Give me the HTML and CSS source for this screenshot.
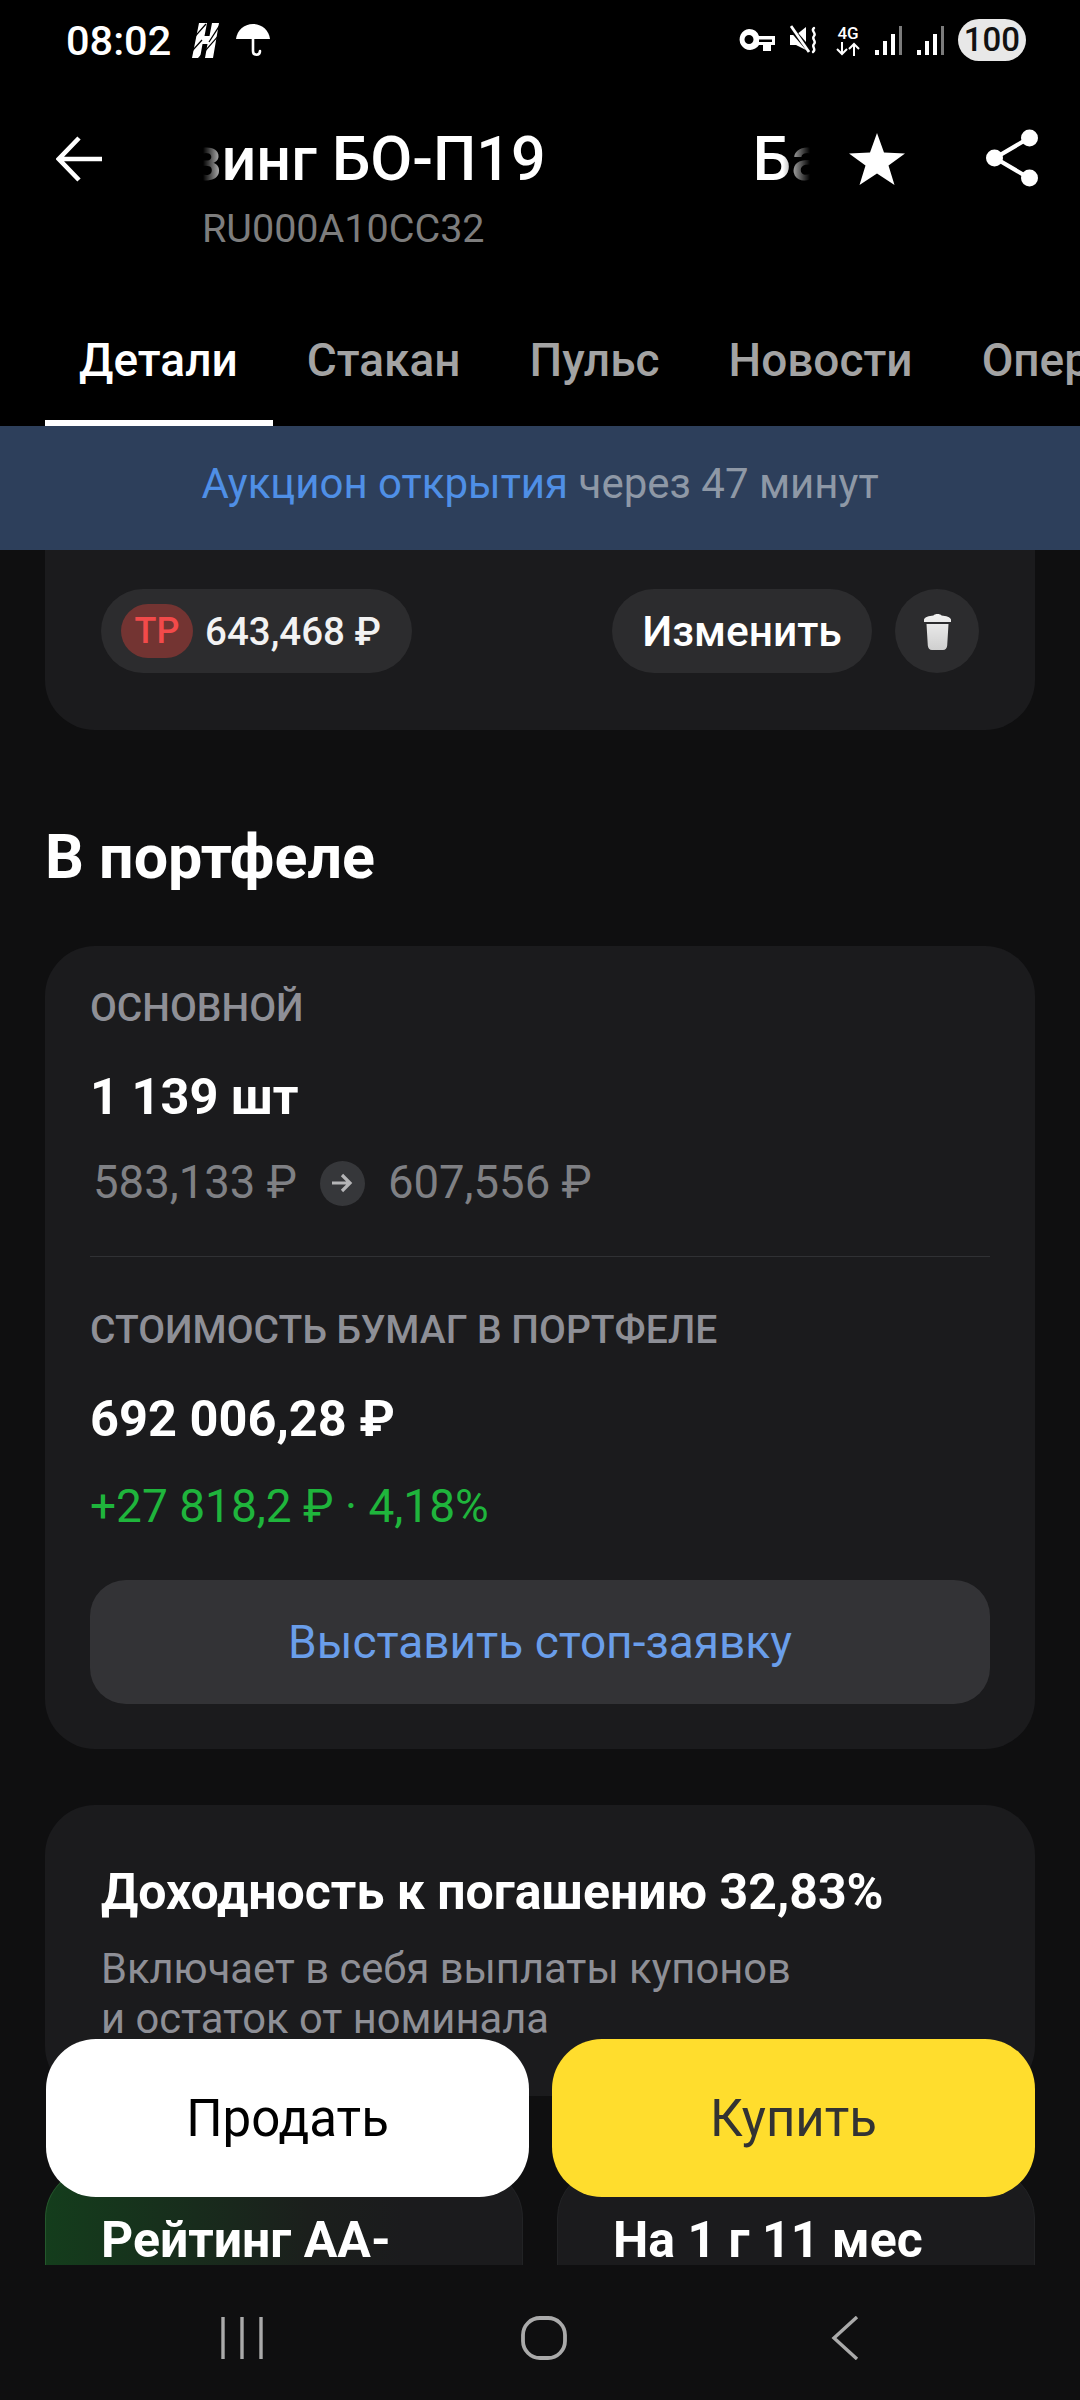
FILE: index.html
```html
<!DOCTYPE html>
<html lang="ru">
<head>
<meta charset="utf-8">
<title>Лизинг БО-П19</title>
<link rel="stylesheet" href="styles.css">
</head>
<body>
<div class="screen">
  <header class="top">
    <div class="status">
      <div class="status-left">
        <span class="time">08:02</span>
        <svg class="st-h" viewBox="0 0 27 35"><path fill="#fff" d="M7 0h8l-2.500 13h5L20 0h7l-6 35h-8l2.500-14h-5L8 35H0z"/><path stroke="#000" stroke-width="1.300" d="M-1 18 14 1M6 36 28 11M0 28 10 17M17 19 28 2"/></svg>
        <svg class="st-u" viewBox="0 0 34 34"><path fill="#fff" d="M17 1C8 1 1 7.500 0 16h34C33 7.500 26 1 17 1z"/><path fill="none" stroke="#fff" stroke-width="2.600" stroke-linecap="round" d="M17 15v13c0 5 7 5 7 0"/></svg>
      </div>
      <div class="status-right">
        <svg class="st-key" viewBox="0 0 37 24"><path fill="#fff" fill-rule="evenodd" d="M11 1a10.500 10.500 0 0 1 10 7h16v9h-4v6h-8v-6h-4a10.500 10.500 0 1 1-10-16zm0 6a4.500 4.500 0 1 0 0 9 4.500 4.500 0 0 0 0-9zm10 4.500a10 10 0 0 1 0 2.500h13v-2.500z"/></svg>
        <svg class="st-mute" viewBox="0 0 30 30"><path fill="#fff" d="M0 10h6l10-8v23L6 20H0z"/><path stroke="#000" stroke-width="5" d="M-2 0 22 28"/><path stroke="#fff" stroke-width="2.800" d="M1 1 19 27"/><path fill="none" stroke="#fff" stroke-width="2.400" stroke-linecap="round" d="M24 3c-4 3 3 5 0 8s3 5 0 8 3 5-1 8"/></svg>
        <div class="st-net">
          <span class="st-4g">4G</span>
          <svg class="st-arrows" viewBox="0 0 26 14"><path fill="none" stroke="#fff" stroke-width="2" d="M7 0v12M2 7l5 5 5-5M19 14V2M14 7l5-5 5 5"/></svg>
        </div>
        <svg class="st-sig" viewBox="0 0 28 29"><path fill="#fff" d="M0 24h4v5H0zM8 15h4v14H8zM16 8h4v21h-4z"/><path fill="#7b7b7b" d="M24 0h3v29h-3z"/></svg>
        <svg class="st-sig" viewBox="0 0 28 29"><path fill="#fff" d="M0 24h4v5H0zM8 15h4v14H8zM16 8h4v21h-4z"/><path fill="#7b7b7b" d="M24 0h3v29h-3z"/></svg>
        <span class="batt">100</span>
      </div>
    </div>
    <div class="title-row">
      <svg class="ic-back" viewBox="0 0 46 46"><path fill="none" stroke="#fff" stroke-width="4.600" d="M46 23H3M23 2 2.800 23 23 44"/></svg>
      <div class="title-col">
        <div class="marquee"><div class="marquee-track"><span class="title-part">Балтийский лизинг БО-П19</span><span class="title-part">Балтийский лизинг БО-П19</span></div></div>
        <div class="isin">RU000A10CC32</div>
      </div>
      <svg class="ic-star" viewBox="0 0 56 52"><path fill="#fff" d="M28 0l7 19.500 21 1-16.500 12 6 19.500L28 40.500 10.500 52l6-19.500L0 20.500l21-1z"/></svg>
      <svg class="ic-share" viewBox="0 0 52 58"><path fill="none" stroke="#fff" stroke-width="4.200" d="M43 9 9 29l34 20"/><circle fill="#fff" cx="43.500" cy="9" r="8.500"/><circle fill="#fff" cx="8.500" cy="29" r="8.500"/><circle fill="#fff" cx="43.500" cy="49" r="8.500"/></svg>
    </div>
    <nav class="tabs">
      <a class="tab tab-active">Детали</a>
      <a class="tab">Стакан</a>
      <a class="tab">Пульс</a>
      <a class="tab">Новости</a>
      <a class="tab">Операции</a>
    </nav>
  </header>
  <div class="banner"><span class="banner-link">Аукцион открытия</span> через 47 минут</div>
  <main class="content">
    <section class="card card-order">
      <div class="order-row">
        <div class="pill pill-tp"><span class="tp-badge">ТР</span><span class="tp-price">643,468 ₽</span></div>
        <div class="order-actions">
          <button class="pill pill-btn">Изменить</button>
          <button class="pill pill-trash" aria-label="Удалить">
            <svg class="ic-trash" viewBox="0 0 27 37"><defs><linearGradient id="trash-fill" x1="0" y1="0" x2="0" y2="1"><stop offset="0" stop-color="#f2f2f2"/><stop offset="1" stop-color="#cfcfcf"/></linearGradient></defs><path fill="url(#trash-fill)" d="M9.500 2.500C10.500.5 16.500.5 17.500 2.500 22 3 26.500 4 27 6.500V9H0V6.500C.5 4 5 3 9.500 2.500zM2.500 11h22l-1.300 21.500c-.2 2.500-1.700 4.500-4.200 4.500H8c-2.500 0-4-2-4.200-4.500z"/></svg>
          </button>
        </div>
      </div>
    </section>
    <h2 class="section-title">В портфеле</h2>
    <section class="card card-portfolio">
      <div class="label">ОСНОВНОЙ</div>
      <div class="big">1 139 шт</div>
      <div class="prices">
        <span>583,133 ₽</span>
        <span class="price-arrow"><svg viewBox="0 0 22 22"><path fill="none" stroke="#b5b5b7" stroke-width="3.200" d="M1 11h18M11 3l8 8-8 8"/></svg></span>
        <span>607,556 ₽</span>
      </div>
      <div class="divider"></div>
      <div class="label">СТОИМОСТЬ БУМАГ В ПОРТФЕЛЕ</div>
      <div class="big">692 006,28 ₽</div>
      <div class="gain">+27 818,2 ₽ · 4,18%</div>
      <button class="stop-btn">Выставить стоп-заявку</button>
    </section>
    <section class="card card-yield">
      <h3 class="yield-title">Доходность к погашению 32,83%</h3>
      <p class="yield-text">Включает в себя выплаты купонов<br>и остаток от номинала</p>
    </section>
    <div class="mini-row">
      <div class="mini mini-green">Рейтинг АА-</div>
      <div class="mini">На 1 г 11 мес</div>
    </div>
    <div class="actions">
      <button class="act act-sell">Продать</button>
      <button class="act act-buy">Купить</button>
    </div>
  </main>
  <footer class="navbar">
    <svg class="nav-ic" viewBox="0 0 44 44"><path fill="none" stroke="#aaa" stroke-width="3.400" d="M3 1v42M22 1v42M41 1v42"/></svg>
    <svg class="nav-ic" viewBox="0 0 46 44"><rect fill="none" stroke="#aaa" stroke-width="3.800" x="2" y="2" width="42" height="40" rx="17"/></svg>
    <svg class="nav-ic" viewBox="0 0 30 44"><path fill="none" stroke="#aaa" stroke-width="3.400" d="M27 1 4 22l23 21"/></svg>
  </footer>
</div>
</body>
</html>
```
FILE: styles.css
```css
* { box-sizing: border-box; }
html, body { margin: 0; padding: 0; background: #0f0f10; }
body { font-family: Roboto, "Noto Sans", sans-serif; color: #fff; }
button { font-family: inherit; border: 0; margin: 0; }
.screen { width: 1080px; height: 2400px; overflow: hidden; display: flex; flex-direction: column; background: #0f0f10; }

.top { background: #000; height: 426px; flex: none; display: flex; flex-direction: column; }
.status { height: 70px; padding: 10px 40px 0 66px; display: flex; justify-content: space-between; align-items: center; flex: none; }
.status-left, .status-right { display: flex; align-items: center; }
.time { font-size: 41.500px; font-weight: 500; }
.st-h { width: 27px; height: 35px; margin-left: 21px; }
.st-u { width: 34px; height: 34px; margin-left: 17px; }
.status-right { padding-right: 14px; }
.st-key { width: 37px; height: 24px; }
.st-mute { width: 30px; height: 30px; margin-left: 15px; }
.st-net { width: 26px; margin-left: 15px; display: flex; flex-direction: column; align-items: center; }
.st-4g { font-size: 17px; line-height: 16px; font-weight: 500; }
.st-arrows { width: 26px; height: 14px; margin-top: 1px; }
.st-sig { width: 28px; height: 29px; margin-left: 14px; }
.st-sig + .batt { margin-left: 13px; }
.batt { width: 68px; height: 42px; border-radius: 21px; background: #e8e8e8; color: #111; font-size: 33px; font-weight: 500; line-height: 42px; text-align: center; }

.title-row { display: flex; align-items: flex-start; padding: 54px 0 0 56px; height: 202px; flex: none; }
.ic-back { width: 46px; height: 46px; margin-top: 12px; flex: none; }
.title-col { width: 607px; margin-left: 101px; flex: none; }
.marquee { height: 70px; overflow: hidden; -webkit-mask-image: linear-gradient(90deg, transparent 0, #000 24px, #000 580px, transparent 607px); mask-image: linear-gradient(90deg, transparent 0, #000 24px, #000 580px, transparent 607px); }
.marquee-track { display: flex; white-space: nowrap; margin-left: -439px; font-size: 61px; line-height: 70px; font-weight: 500; }
.title-part { padding-right: 207px; flex: none; }
.isin { font-size: 39.500px; line-height: 46px; font-weight: 400; color: #7d7d7d; margin: 12px 0 0 -1px; }
.ic-star { width: 56px; height: 52px; margin-left: 39px; margin-top: 9px; flex: none; }
.ic-share { width: 52px; height: 58px; margin-left: 81px; margin-top: 5px; flex: none; }

.tabs { display: flex; flex: 1; padding-left: 45px; align-items: stretch; overflow: hidden; white-space: nowrap; }
.tab { font-size: 46px; font-weight: 500; color: #a3a3a3; padding: 62px 35px 0 34px; display: flex; align-items: flex-start; line-height: 52px; flex: none; }
.tab-active { color: #fff; border-bottom: 6px solid #fff; }

.banner { height: 124px; background: #2d3f5b; flex: none; display: flex; align-items: center; justify-content: center; padding-bottom: 10px; font-size: 42px; color: #8e98a6; white-space: pre; }
.banner-link { color: #4f8fe6; }

.content { flex: 1; position: relative; overflow: hidden; padding: 0 45px; min-height: 0; }
.card { background: #1b1b1d; border-radius: 50px; }
.card-order { margin-top: -60px; height: 240px; padding: 99px 56px 0; }
.order-row { display: flex; justify-content: space-between; }
.order-actions { display: flex; gap: 23px; }
.pill { height: 84px; border-radius: 42px; background: #2c2c2e; display: flex; align-items: center; color: #fff; }
.pill-tp { width: 311px; padding-left: 20px; }
.tp-badge { width: 72px; height: 54px; border-radius: 27px; background: #733432; color: #f24a4a; font-size: 36px; font-weight: 500; display: flex; align-items: center; justify-content: center; flex: none; }
.tp-price { font-size: 38.500px; font-weight: 500; margin-left: 12px; color: #f2f2f2; }
.pill-btn { width: 260px; justify-content: center; font-size: 42.500px; font-weight: 500; }
.pill-trash { width: 84px; justify-content: center; padding: 0; }
.ic-trash { width: 27px; height: 37px; }

.section-title { margin: 94px 0 0 0; font-size: 61px; line-height: 66px; font-weight: 700; height: 66px; }

.card-portfolio { margin-top: 56px; height: 803px; padding: 40px 45px 0; display: flex; flex-direction: column; align-items: flex-start; }
.label { font-size: 39px; line-height: 44px; font-weight: 500; color: #8e8f96; }
.big { font-size: 50.500px; line-height: 58px; font-weight: 700; margin-top: 38px; }
.prices { display: flex; align-items: center; margin-top: 31px; font-size: 45.500px; line-height: 52px; color: #7f8084; padding-left: 3px; }
.price-arrow { width: 45px; height: 45px; border-radius: 50%; background: #36373a; margin: 0 23px 0 23px; display: flex; align-items: center; justify-content: center; }
.price-arrow svg { width: 22px; height: 22px; }
.divider { width: 100%; height: 1px; background: #303134; margin: 47px 0 51px; flex: none; }
.gain { font-size: 46px; line-height: 52px; color: #1fb53c; margin-top: 32px; }
.stop-btn { width: 100%; height: 124px; border-radius: 36px; background: #333336; color: #6a9eea; font-size: 46px; margin-top: 48px; flex: none; }

.card-yield { margin-top: 56px; height: 291px; padding: 58px 56px 0; margin-bottom: 72px; }
.yield-title { margin: 0; font-size: 50px; line-height: 58px; font-weight: 700; white-space: nowrap; }
.yield-text { margin: 23px 0 0; font-size: 41.700px; line-height: 50px; color: #8e8f96; }

.mini-row { display: flex; justify-content: space-between; }
.mini { width: 478px; height: 200px; border-radius: 50px; background: #1b1b1d; border: 1px solid #222325; font-size: 50px; font-weight: 700; padding: 42px 55px 0; line-height: 58px; }
.mini-green { background: linear-gradient(90deg, #143d1c, #1b1f1c 55%, #1b1b1d 75%); border-left-color: #24582c; border-top-color: #24582c; }

.actions { position: absolute; left: 46px; right: 45px; top: 1489px; display: flex; justify-content: space-between; }
.act { width: 483px; height: 158px; border-radius: 50px; font-size: 51px; }
.act-sell { background: #fff; color: #000; }
.act-buy { background: #ffdd2d; color: #333; }

.navbar { height: 135px; flex: none; background: #0f0f10; display: flex; align-items: flex-start; justify-content: space-between; padding: 51px 220px 0 220px; }
.nav-ic { height: 44px; width: 44px; }
.nav-ic:nth-child(2) { width: 46px; margin-right: 6px; }
.nav-ic:nth-child(3) { width: 30px; }
```
